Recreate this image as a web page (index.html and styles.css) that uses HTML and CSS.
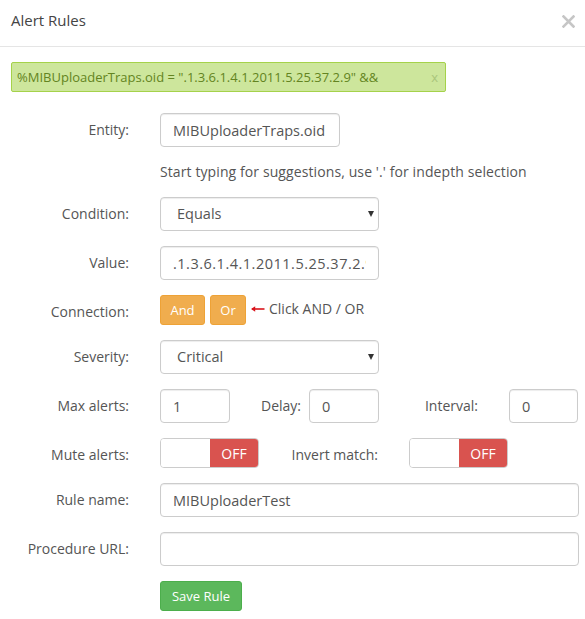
FILE: index.html
```html
<!DOCTYPE html>
<html>
<head>
<meta charset="utf-8">
<link rel="stylesheet" href="styles.css">
</head>
<body>
<div class="modal">
  <div class="modal-header">
    <h4 class="modal-title">Alert Rules</h4>
    <span class="close" aria-label="Close">
      <svg width="13" height="13" viewBox="0 0 13 13"><path d="M1.5 1.5 L11.5 11.5 M11.5 1.5 L1.5 11.5" stroke="#c6c6c6" stroke-width="2.6" stroke-linecap="square" fill="none"/></svg>
    </span>
  </div>
  <div class="modal-body">
    <div class="tag">
      <span class="tag-text">%MIBUploaderTraps.oid = ".1.3.6.1.4.1.2011.5.25.37.2.9" &amp;&amp;</span>
      <span class="tag-x">x</span>
    </div>

    <div class="form-row">
      <label class="control-label">Entity:</label>
      <div class="field">
        <input class="form-control w-entity" type="text" value="MIBUploaderTraps.oid">
        <p class="help-block">Start typing for suggestions, use '.' for indepth selection</p>
      </div>
    </div>

    <div class="form-row">
      <label class="control-label">Condition:</label>
      <div class="field">
        <div class="select-wrap w-select">
          <select class="form-control select"><option>Equals</option></select>
        </div>
      </div>
    </div>

    <div class="form-row">
      <label class="control-label">Value:</label>
      <div class="field">
        <input class="form-control w-select value-input" type="text" value=".1.3.6.1.4.1.2011.5.25.37.2.9">
      </div>
    </div>

    <div class="form-row">
      <label class="control-label">Connection:</label>
      <div class="field inline">
        <button class="btn btn-warning btn-and" type="button">And</button>
        <button class="btn btn-warning btn-or" type="button">Or</button>
        <svg class="arrow" width="14" height="6" viewBox="0 0 14 6"><path d="M1 3 H13.5" stroke="#d9131b" stroke-width="1.6" fill="none"/><path d="M0 3 L4.2 0.2 L4.2 5.8 Z" fill="#d9131b"/></svg>
        <span class="hint">Click AND / OR</span>
      </div>
    </div>

    <div class="form-row">
      <label class="control-label">Severity:</label>
      <div class="field">
        <div class="select-wrap w-select">
          <select class="form-control select"><option>Critical</option></select>
        </div>
      </div>
    </div>

    <div class="form-row">
      <label class="control-label">Max alerts:</label>
      <div class="field inline">
        <input class="form-control w-small" type="text" value="1">
        <label class="sub-label sub-delay">Delay:</label>
        <input class="form-control w-small" type="text" value="0">
        <label class="sub-label sub-interval">Interval:</label>
        <input class="form-control w-small2" type="text" value="0">
      </div>
    </div>

    <div class="form-row">
      <label class="control-label">Mute alerts:</label>
      <div class="field inline">
        <div class="switch"><span class="switch-blank"></span><span class="switch-off">OFF</span></div>
        <label class="sub-label sub-invert">Invert match:</label>
        <div class="switch"><span class="switch-blank"></span><span class="switch-off">OFF</span></div>
      </div>
    </div>

    <div class="form-row">
      <label class="control-label">Rule name:</label>
      <div class="field">
        <input class="form-control w-full" type="text" value="MIBUploaderTest">
      </div>
    </div>

    <div class="form-row">
      <label class="control-label">Procedure URL:</label>
      <div class="field">
        <input class="form-control w-full" type="text" value="">
      </div>
    </div>

    <div class="form-row">
      <span class="control-label"></span>
      <div class="field">
        <button class="btn btn-success" type="button">Save Rule</button>
      </div>
    </div>
  </div>
</div>
</body>
</html>
```

FILE: styles.css
```css
* { box-sizing: border-box; }
html, body { margin: 0; padding: 0; background: #fff; }
body {
  font-family: "Open Sans", "Liberation Sans", sans-serif;
  font-size: 14px;
  color: #555;
}
.modal { width: 585px; }
.modal-header {
  display: flex;
  justify-content: space-between;
  align-items: flex-start;
  padding: 10px 10px 15px 11px;
  border-bottom: 1px solid #e5e5e5;
}
.modal-title {
  margin: 0;
  font-size: 15px;
  font-weight: normal;
  line-height: 21px;
  color: #444;
}
.close { display: block; margin-top: 5px; line-height: 0; }

.modal-body { padding: 15px 7px 0 0; }

.tag {
  display: flex;
  align-items: center;
  width: 435px;
  height: 30px;
  margin: 0 0 21px 11px;
  padding: 0 7px 0 5px;
  background: #cde69c;
  border: 1px solid #a5d24a;
  border-radius: 2px;
  color: #638421;
  font-size: 13px;
}
.tag-x { margin-left: auto; color: #a9c57b; font-size: 13px; }

.form-row {
  display: flex;
  align-items: flex-start;
  margin-bottom: 15px;
}
.control-label {
  flex: 0 0 130px;
  width: 130px;
  text-align: right;
  padding: 7px 1px 0 0;
  line-height: 20px;
  font-size: 14px;
  color: #555;
}
.field { margin-left: 30px; }
.field.inline { display: flex; align-items: center; }

.form-control {
  display: block;
  height: 34px;
  padding: 6px 12px;
  font-family: inherit;
  font-size: 14.5px;
  line-height: 20px;
  color: #555;
  background: #fff;
  border: 1px solid #ccc;
  border-radius: 4px;
  box-shadow: inset 0 1px 1px rgba(0,0,0,.075);
  outline: none;
}
.value-input { letter-spacing: 0.5px; }
.w-entity { width: 180px; }
.w-select { width: 219px; }
.w-small { width: 70px; }
.w-small2 { width: 69px; }
.w-full { width: 419px; }

.help-block {
  margin: 15px 0 0;
  font-size: 14px;
  letter-spacing: 0.1px;
  line-height: 20px;
  color: #555;
}

.select-wrap { position: relative; }
.select {
  width: 100%;
  -webkit-appearance: none;
  appearance: none;
  padding-left: 16px;
}
.select-wrap::after {
  content: "";
  position: absolute;
  right: 5px;
  top: 14px;
  border-left: 3px solid transparent;
  border-right: 3px solid transparent;
  border-top: 6px solid #333;
}

.btn {
  display: inline-flex;
  align-items: center;
  justify-content: center;
  height: 30px;
  padding: 0 10px;
  font-family: inherit;
  font-size: 13px;
  color: #fff;
  border: 1px solid transparent;
  border-radius: 3px;
  cursor: pointer;
}
.btn-warning { background: #f0ad4e; border-color: #eea236; }
.btn-and { width: 45px; }
.btn-or { width: 36px; margin-left: 5px; }
.arrow { margin-left: 5px; margin-top: -3px; }
.hint { margin-left: 4px; margin-top: -3px; font-size: 14px; color: #555; }
.btn-success { background: #5cb85c; border-color: #4cae4c; width: 82px; }

.sub-label { font-size: 14px; color: #555; text-align: right; line-height: 20px; }
.sub-delay { width: 71px; margin-right: 8px; }
.sub-interval { width: 99px; margin-right: 31px; }
.sub-invert { width: 119px; margin-right: 31px; margin-top: 4px; }

.switch {
  display: flex;
  width: 99px;
  height: 30px;
  border: 1px solid #ccc;
  border-radius: 4px;
  overflow: hidden;
}
.switch-blank { flex: 0 0 49px; background: #fff; }
.switch-off {
  flex: 1;
  display: flex;
  align-items: center;
  justify-content: center;
  background: #d9534f;
  color: #fff;
  font-size: 14px;
}
```
